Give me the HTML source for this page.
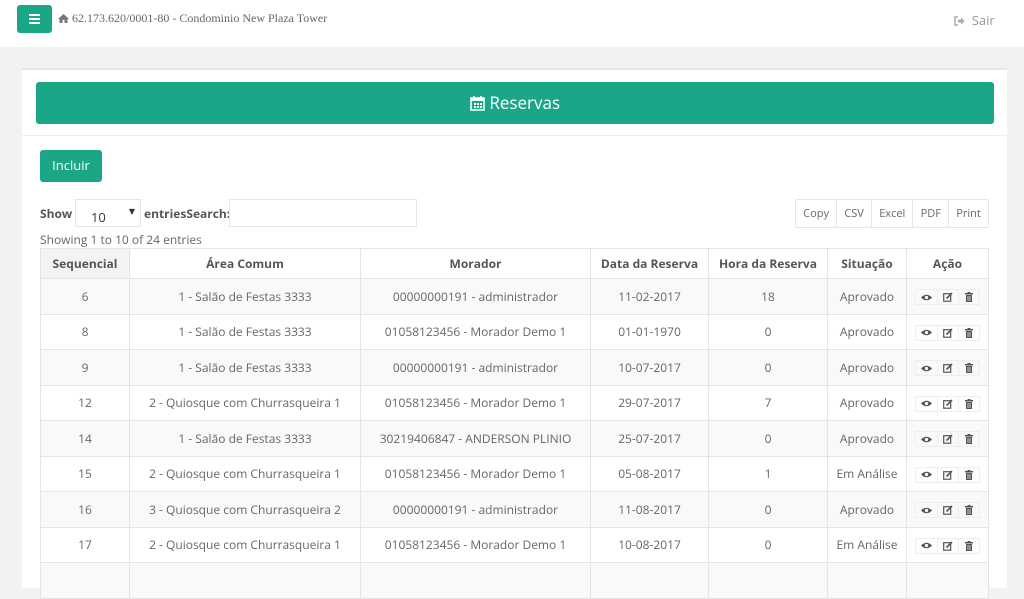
<!DOCTYPE html>
<html><head><meta charset="utf-8"><style>
*{box-sizing:border-box;margin:0;padding:0}
body{width:1024px;height:575px;overflow:hidden;background:#f1f2f3;font-family:"Open Sans","DejaVu Sans","Liberation Sans",sans-serif;color:#555;position:relative}
.top{position:absolute;left:0;top:0;width:1024px;height:47px;background:#fff}
.menu{position:absolute;left:17px;top:5px;width:35px;height:28px;background:#1aa687;border-radius:3px}
.menu i{position:absolute;left:12px;width:11px;height:2px;background:#fff}
.title{position:absolute;left:58px;top:11px;font-family:"Liberation Serif",serif;font-size:12px;color:#666}
.sair{position:absolute;left:954px;top:11px;font-size:13px;color:#999}
.panel{position:absolute;left:22px;top:68px;width:985px;height:520px;background:#fff;border-top:2px solid #e6e7e8}
.banner{position:absolute;left:14px;top:12px;width:958px;height:42px;background:#1aa687;border-radius:3px;color:#fff;font-size:17px;text-align:center;line-height:42px}
.hr{position:absolute;left:0;top:65px;width:985px;height:1px;background:#eee}
.incl{position:absolute;left:18px;top:80px;width:62px;height:32px;background:#1aa687;border-radius:3px;color:#fff;font-size:13px;text-align:center;line-height:31px}
.show{position:absolute;left:18px;top:135px;font-size:12px;font-weight:bold;color:#555}
.sel{position:absolute;left:53px;top:129px;width:66px;height:28px;border:1px solid #e5e5e5;font-size:13px;padding:8px 0 0 15px;color:#333}
.sel span{position:absolute;right:5px;top:6px;font-size:8px}
.ent{position:absolute;left:122px;top:135px;font-size:12px;font-weight:bold}
.srch{position:absolute;left:207px;top:129px;width:188px;height:28px;border:1px solid #e5e5e5}
.btns{position:absolute;left:773px;top:129px;width:194px;height:29px;border:1px solid #e5e5e5;display:flex;border-radius:2px}
.btns div{font-size:11px;color:#666;flex:auto;text-align:center;line-height:27px;border-left:1px solid #e5e5e5}
.btns div:first-child{border-left:0}
.info{position:absolute;left:18px;top:161px;font-size:12px;color:#666}
table{position:absolute;left:18px;top:178px;border-collapse:collapse;font-size:12px}
td,th{border:1px solid #e5e5e5;text-align:center;color:#666;font-weight:normal}
th{height:30px;font-weight:bold;color:#555}
td{height:35.5px}
tr.g td{background:#f9f9f9}
th.s{background:#f3f3f3}
.act{display:inline-flex;border:1px solid #eee;height:16px;vertical-align:middle}
.act span{width:21px;border-left:1px solid #eee;display:flex;align-items:center;justify-content:center}
.act span:first-child{border-left:0}
</style></head><body>
<div class="top">
<div class="menu"><i style="top:9px"></i><i style="top:13px"></i><i style="top:17px"></i></div>
<div class="title"><svg width="11" height="9" viewBox="0 0 11 9" style="vertical-align:-1px"><path d="M5.5 0 L11 5 H9.5 V9 H6.5 V6 H4.5 V9 H1.5 V5 H0 Z" fill="#777"/></svg> 62.173.620/0001-80 - Condominio New Plaza Tower</div>
<div class="sair"><svg width="11" height="10" viewBox="0 0 11 10" style="vertical-align:-1px"><path d="M4 1 H1 V9 H4" fill="none" stroke="#aaa" stroke-width="1.5"/><path d="M4 3.5 H7 V1.5 L10.5 5 L7 8.5 V6.5 H4 Z" fill="#aaa"/></svg>&nbsp; Sair</div>
</div>
<div class="panel">
<div class="banner"><svg width="15" height="15" viewBox="0 0 15 15" style="vertical-align:-2px"><rect x="1" y="2" width="13" height="12" fill="none" stroke="#fff" stroke-width="1.5"/><rect x="1" y="2" width="13" height="3" fill="#fff"/><path d="M4 7h2v2H4zM7 7h2v2H7zM10 7h2v2h-2zM4 10h2v2H4zM7 10h2v2H7zM10 10h2v2h-2z" fill="#fff"/><path d="M4 0v3M11 0v3" stroke="#fff" stroke-width="1.5"/></svg> Reservas</div>
<div class="hr"></div>
<div class="incl">Incluir</div>
<div class="show">Show</div>
<div class="sel">10<span>▼</span></div>
<div class="ent">entriesSearch:</div>
<div class="srch"></div>
<div class="btns"><div>Copy</div><div>CSV</div><div>Excel</div><div>PDF</div><div>Print</div></div>
<div class="info">Showing 1 to 10 of 24 entries</div>
<table>
<tr><th class="s" style="width:89px">Sequencial</th><th style="width:231px">Área Comum</th><th style="width:230px">Morador</th><th style="width:118px">Data da Reserva</th><th style="width:119px">Hora da Reserva</th><th style="width:79px">Situação</th><th style="width:82px">Ação</th></tr>
<tr class="g"><td>6</td><td>1 - Salão de Festas 3333</td><td>00000000191 - administrador</td><td>11-02-2017</td><td>18</td><td>Aprovado</td><td>A</td></tr>
<tr><td>8</td><td>1 - Salão de Festas 3333</td><td>01058123456 - Morador Demo 1</td><td>01-01-1970</td><td>0</td><td>Aprovado</td><td>A</td></tr>
<tr class="g"><td>9</td><td>1 - Salão de Festas 3333</td><td>00000000191 - administrador</td><td>10-07-2017</td><td>0</td><td>Aprovado</td><td>A</td></tr>
<tr><td>12</td><td>2 - Quiosque com Churrasqueira 1</td><td>01058123456 - Morador Demo 1</td><td>29-07-2017</td><td>7</td><td>Aprovado</td><td>A</td></tr>
<tr class="g"><td>14</td><td>1 - Salão de Festas 3333</td><td>30219406847 - ANDERSON PLINIO</td><td>25-07-2017</td><td>0</td><td>Aprovado</td><td>A</td></tr>
<tr><td>15</td><td>2 - Quiosque com Churrasqueira 1</td><td>01058123456 - Morador Demo 1</td><td>05-08-2017</td><td>1</td><td>Em Análise</td><td>A</td></tr>
<tr class="g"><td>16</td><td>3 - Quiosque com Churrasqueira 2</td><td>00000000191 - administrador</td><td>11-08-2017</td><td>0</td><td>Aprovado</td><td>A</td></tr>
<tr><td>17</td><td>2 - Quiosque com Churrasqueira 1</td><td>01058123456 - Morador Demo 1</td><td>10-08-2017</td><td>0</td><td>Em Análise</td><td>A</td></tr>
<tr class="g"><td></td><td></td><td></td><td></td><td></td><td></td><td></td></tr>
</table>
</div>
<script>
var a='<span class="act"><span><svg width="11" height="7" viewBox="0 0 11 7"><path d="M0 3.5 Q5.5 -2 11 3.5 Q5.5 9 0 3.5Z" fill="#555"/><circle cx="5.5" cy="3.5" r="1.6" fill="#fff"/></svg></span><span><svg width="10" height="10" viewBox="0 0 10 10"><rect x="0.7" y="1.7" width="7" height="7.5" fill="none" stroke="#555" stroke-width="1.2"/><path d="M3.5 6.5 L9 1" stroke="#555" stroke-width="1.6"/></svg></span><span><svg width="8" height="10" viewBox="0 0 8 10"><rect x="0" y="1" width="8" height="1.5" fill="#555"/><rect x="2.5" y="0" width="3" height="1.5" fill="#555"/><rect x="1" y="3" width="6" height="7" fill="#555"/><path d="M3 4v5M5 4v5" stroke="#fff" stroke-width="0.7"/></svg></span></span>';
document.querySelectorAll('td').forEach(function(t){if(t.textContent==='A')t.innerHTML=a;});
</script>
</body></html>
